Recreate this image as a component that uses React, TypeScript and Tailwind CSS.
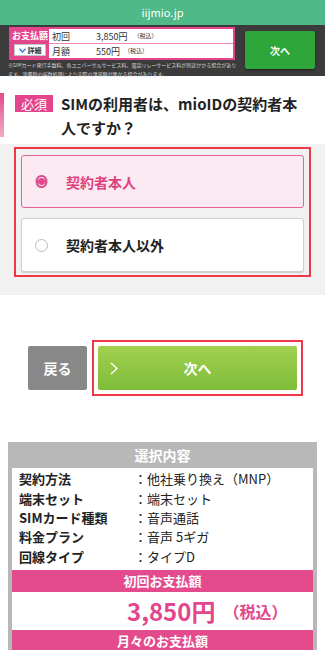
import React from "react";

const font = { fontFamily: '"Noto Sans CJK JP", "Noto Sans", sans-serif' };

const rows: [string, string][] = [
  ["契約方法", "：他社乗り換え（MNP）"],
  ["端末セット", "：端末セット"],
  ["SIMカード種類", "：音声通話"],
  ["料金プラン", "：音声 5ギガ"],
  ["回線タイプ", "：タイプD"],
];

function PayBar() {
  return (
    <div className="h-[51px] bg-[#3b3b3b] relative">
      <div className="absolute left-[9px] top-[2px] w-[226px] h-[33px] flex border-2 border-[#e3468c] bg-white">
        <div className="w-[38px] bg-[#e3468c] flex flex-col items-center">
          <div className="text-[9px] leading-[14px] font-bold text-white">お支払額</div>
          <div className="mt-[1px] w-[32px] h-[12px] bg-white border border-[#c2c2c2] flex items-center justify-center gap-[2px]">
            <svg width="7" height="5" viewBox="0 0 7 5">
              <path d="M0.5 0.8 L3.5 4 L6.5 0.8" fill="none" stroke="#2b76d2" strokeWidth="1.3" />
            </svg>
            <span className="text-[7px] leading-none font-bold text-[#333]">詳細</span>
          </div>
        </div>
        <div className="flex-1 flex flex-col text-[#333]">
          <div className="h-[15px] flex items-center border-b border-[#ec8ab5]">
            <span className="w-[47px] pl-[3px] text-[9px] leading-none">初回</span>
            <span className="text-[9px] leading-none">3,850円</span>
            <span className="ml-[6px] text-[6px] leading-none">（税込）</span>
          </div>
          <div className="flex-1 flex items-center">
            <span className="w-[47px] pl-[3px] text-[9px] leading-none">月額</span>
            <span className="text-[9px] leading-none">550円</span>
            <span className="ml-[4px] text-[6px] leading-none">（税込）</span>
          </div>
        </div>
      </div>
      <div className="absolute left-[8px] top-[35px] w-[230px] text-[5px] leading-[9px] text-[#d8d8d8]">
        ※SIMカード発行手数料、各ユニバーサルサービス料、電話リレーサービス料が別途かかる場合があります。消費税の端数処理により実際の請求額が異なる場合があります。
      </div>
      <div className="absolute left-[245px] top-[6px] w-[70px] h-[38px] rounded-[2px] bg-[#2ea63a] shadow-[0_1px_2px_rgba(0,0,0,0.5)] flex items-center justify-center text-white text-[10px] font-bold">
        次へ
      </div>
    </div>
  );
}

function Option({ label, checked }: { label: string; checked: boolean }) {
  return (
    <div
      className={
        checked
          ? "h-[53px] rounded-[3px] border border-[#e8619a] bg-[#fbeaf2] flex items-center"
          : "h-[54px] rounded-[3px] border border-[#cfcfcf] bg-white shadow-[0_1px_1px_rgba(0,0,0,0.15)] flex items-center"
      }
    >
      <div className="ml-[13px] w-[13px] h-[13px] rounded-full border border-[#bbb] bg-white flex items-center justify-center">
        {checked && (
          <div className="w-[13px] h-[13px] rounded-full border-2 border-[#e3468c] bg-white flex items-center justify-center">
            <div className="w-[7px] h-[7px] rounded-full bg-[#e3468c]" />
          </div>
        )}
      </div>
      <span className={"ml-[18px] text-[14px] font-bold leading-none " + (checked ? "text-[#e0427f]" : "text-[#222]")}>
        {label}
      </span>
    </div>
  );
}

export default function App() {
  return (
    <div className="w-[325px] h-[650px] overflow-hidden bg-white" style={font}>
      <div className="h-[25px] bg-[#4fb987] flex items-center justify-center text-white text-[11px]">iijmio.jp</div>
      <PayBar />

      <div className="pt-[17px] h-[68px] flex items-start">
        <div className="w-[4px] h-[44px] bg-gradient-to-b from-[#e3468c] to-[#f3a9c8]" />
        <div className="ml-[11px] mt-[2px] w-[38px] h-[17px] bg-[#e3468c] text-white text-[13px] leading-[17px] text-center">必須</div>
        <div className="ml-[8px] -mt-[1px] text-[15px] leading-[24px] font-bold text-[#222]">
          SIMの利用者は、mioIDの契約者本
          <br />
          人ですか？
        </div>
      </div>

      <div className="bg-[#f1f1f1] pt-[3px] pb-[18px]">
        <div className="mx-[14px] border-2 border-[#ee3848] pt-[6px] pb-[3px] px-[5px] flex flex-col gap-[10px]">
          <Option label="契約者本人" checked />
          <Option label="契約者本人以外" checked={false} />
        </div>
      </div>

      <div className="pt-[45px] pl-[28px] flex items-center gap-[5px]">
        <div className="w-[59px] h-[44px] rounded-[2px] bg-[#888] flex items-center justify-center text-white text-[14px] font-bold">戻る</div>
        <div className="w-[211px] border-2 border-[#ee3848] p-[4px]">
          <div className="relative h-[44px] rounded-[2px] bg-gradient-to-b from-[#a2d04e] to-[#7dbd3a] flex items-center justify-center text-white text-[14px] font-bold">
            <svg className="absolute left-[12px] top-[16px]" width="8" height="13" viewBox="0 0 8 13">
              <path d="M1 1 L7 6.5 L1 12" fill="none" stroke="white" strokeWidth="1.4" />
            </svg>
            次へ
          </div>
        </div>
      </div>

      <div className="mt-[46px] mx-[8px] bg-[#b8b8b8] px-[4px]">
        <div className="h-[26px] flex items-center justify-center text-white text-[14px] font-bold">選択内容</div>
        <div className="bg-white pt-[1px] pb-[4px]">
          {rows.map(([k, v]) => (
            <div key={k} className="h-[19.4px] flex items-center text-[13px] leading-none text-[#222]">
              <span className="w-[122px] pl-[7px] font-bold">{k}</span>
              <span>{v}</span>
            </div>
          ))}
        </div>
        <div className="h-[22px] bg-[#e44b8d] flex items-center justify-center text-white text-[13px] font-bold">初回お支払額</div>
        <div className="h-[38px] bg-white flex items-center pl-[115px] text-[#e3468c] font-bold">
          <span className="text-[24px] leading-none">3,850円</span>
          <span className="ml-[8px] text-[16px] leading-none">（税込）</span>
        </div>
        <div className="h-[22px] bg-[#e44b8d] flex items-center justify-center text-white text-[13px] font-bold">月々のお支払額</div>
      </div>
    </div>
  );
}
